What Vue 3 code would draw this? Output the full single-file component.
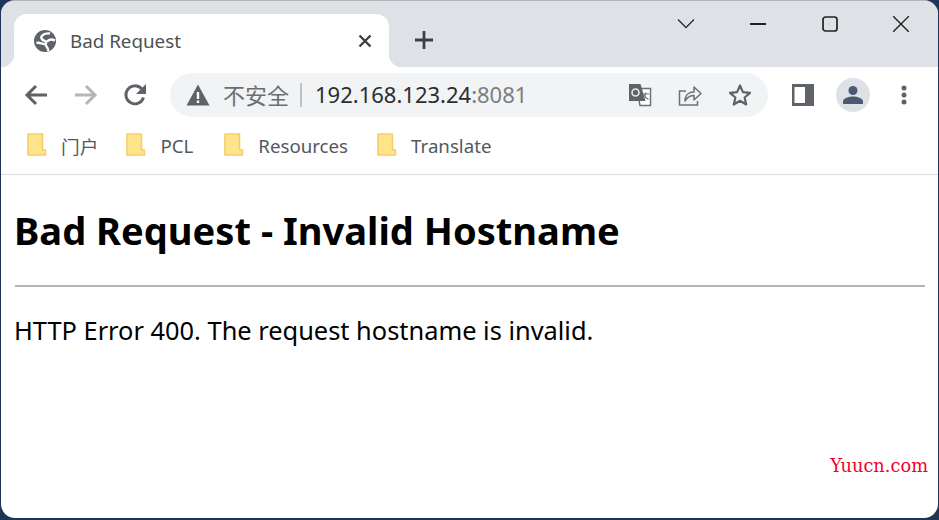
<script setup>
const bookmarks = [
  { label: '门户', gap: 'b1' },
  { label: 'PCL', gap: 'b2' },
  { label: 'Resources', gap: 'b3' },
  { label: 'Translate', gap: 'b4' },
]
</script>

<template>
  <div class="screen">
    <div class="window">
      <header class="strip">
        <div class="tab">
          <svg class="globe" viewBox="0 0 24 24" width="24" height="24">
            <circle cx="12" cy="12" r="11" fill="#5f6368" />
            <path d="M17 4.500c-3-.5-7 .5-8.500 3-1 2 1 3.500 3.500 4.500 2 1 1.500 3-.5 3-2.500 0-5-2-8-1M12 15c2 3 3 4 3.500 7M14 12.500c2-2.500 5-2.500 8-1" fill="none" stroke="#fff" stroke-width="2.400" />
          </svg>
          <span class="tab-title">Bad Request</span>
          <svg class="tab-close" viewBox="0 0 14 14" width="14" height="14">
            <path d="M1.500 1.500l11 11M12.500 1.500l-11 11" stroke="#3c4043" stroke-width="2.400" fill="none" />
          </svg>
        </div>
        <svg class="plus" viewBox="0 0 20 20" width="20" height="20">
          <path d="M10 1v18M1 10h18" stroke="#3c4043" stroke-width="2.800" fill="none" />
        </svg>
        <div class="controls">
          <svg viewBox="0 0 18 12" width="18" height="12"><path d="M1 1.500l8 8 8-8" fill="none" stroke="#2b2b2b" stroke-width="1.300" /></svg>
          <svg viewBox="0 0 16 16" width="16" height="16"><path d="M0 8h16" stroke="#222" stroke-width="1.800" /></svg>
          <svg viewBox="0 0 16 16" width="16" height="16"><rect x="1" y="1" width="14" height="14" rx="2.500" fill="none" stroke="#222" stroke-width="1.700" /></svg>
          <svg viewBox="0 0 16 16" width="16" height="16"><path d="M0 0l16 16M16 0L0 16" stroke="#222" stroke-width="1.400" fill="none" /></svg>
        </div>
      </header>

      <nav class="toolbar">
        <svg class="nav back" viewBox="0 0 24 24" width="24" height="24"><path d="M23 12H3M12 3l-9 9 9 9" fill="none" stroke="#5f6368" stroke-width="3" /></svg>
        <svg class="nav fwd" viewBox="0 0 24 24" width="24" height="24"><path d="M1 12h20M12 3l9 9-9 9" fill="none" stroke="#b4b6b9" stroke-width="3" /></svg>
        <svg class="nav reload" viewBox="0 0 24 24" width="24" height="24">
          <path d="M20.500 14.500a9 9 0 1 1-1.900-8.700L21 8.500" fill="none" stroke="#5f6368" stroke-width="2.900" />
          <path d="M23 1v10H13z" fill="#5f6368" />
        </svg>
        <div class="omnibox">
          <svg class="warn" viewBox="0 0 24 22" width="24" height="22">
            <path d="M12 .5L23.500 21.500H.5z" fill="#5f6368" />
            <path d="M10.800 8h2.400v7h-2.400zM10.800 16.500h2.400v2.500h-2.400z" fill="#fff" />
          </svg>
          <span class="insecure">不安全</span>
          <span class="divider"></span>
          <span class="url">192.168.123.24<span class="port">:8081</span></span>
          <div class="omni-icons">
            <svg viewBox="0 0 24 24" width="24" height="24">
              <path d="M9 5.500h13.500v17H12z" fill="#fff" stroke="#6d7175" stroke-width="1.500" />
              <path d="M1 1h11.500l5 17H1z" fill="#5f6368" />
              <circle cx="7.500" cy="9.500" r="3.500" fill="none" stroke="#e8eaed" stroke-width="1.600" />
              <path d="M15 11h6M18 9.500c-.5 3-2 5-3.500 6M16 12c.8 2 2.500 3.500 4.500 4.500" fill="none" stroke="#6d7175" stroke-width="1.200" />
            </svg>
            <svg viewBox="0 0 24 24" width="24" height="24">
              <path d="M8 8H1.500v14h18v-4" fill="none" stroke="#6d7175" stroke-width="1.500" />
              <path d="M7 18c0-6 4-9 9-9V4l7 6.500-7 6.500v-4.500c-4 0-6.500 1.500-9 5.500z" fill="#f1f3f4" stroke="#6d7175" stroke-width="1.500" stroke-linejoin="round" />
            </svg>
            <svg viewBox="0 0 24 24" width="24" height="24">
              <path d="M12 2.500l2.900 6.600 7.100.7-5.400 4.700 1.600 7-6.200-3.700-6.200 3.700 1.600-7L2 9.800l7.100-.7z" fill="none" stroke="#5f6368" stroke-width="2.200" stroke-linejoin="round" />
            </svg>
          </div>
        </div>
        <svg class="panel" viewBox="0 0 22 22" width="22" height="22">
          <rect x="0" y="0" width="22" height="22" fill="#5f6368" />
          <rect x="2.500" y="3" width="10.500" height="16" fill="#fff" />
        </svg>
        <div class="avatar">
          <svg viewBox="0 0 20 20" width="20" height="20">
            <circle cx="10" cy="5.500" r="4.500" fill="#4a5a74" />
            <path d="M0 19v-2.500c0-3.500 6-5 10-5s10 1.500 10 5V19z" fill="#4a5a74" />
          </svg>
        </div>
        <svg class="menu" viewBox="0 0 6 20" width="6" height="20">
          <circle cx="3" cy="3" r="2.500" fill="#5f6368" />
          <circle cx="3" cy="10" r="2.500" fill="#5f6368" />
          <circle cx="3" cy="17" r="2.500" fill="#5f6368" />
        </svg>
      </nav>

      <div class="bookmarks">
        <div v-for="b in bookmarks" :key="b.label" class="bookmark" :class="b.gap">
          <svg class="folder" viewBox="0 0 20 23" width="20" height="23">
            <path d="M1 1h14.500v16H18.500v5H1z" fill="#fee48c" stroke="#f5cf63" stroke-width="1.600" stroke-linejoin="round" />
          </svg>
          <span class="bookmark-label">{{ b.label }}</span>
        </div>
      </div>

      <main class="page">
        <h1>Bad Request - Invalid Hostname</h1>
        <hr />
        <p>HTTP Error 400. The request hostname is invalid.</p>
        <div class="mark">Yuucn.com</div>
      </main>
    </div>
  </div>
</template>

<style>
html, body { margin: 0; overflow: hidden; }
</style>

<style scoped>
.screen {
  width: 939px;
  height: 520px;
  background: #1d3557;
  overflow: hidden;
  font-family: "Noto Sans", "Noto Sans CJK SC", sans-serif;
}
.window {
  box-sizing: border-box;
  width: 937px;
  height: 518px;
  margin-left: 1px;
  border-top: 1px solid #b5b5b5;
  border-radius: 14px;
  background: #fff;
  overflow: hidden;
  display: flex;
  flex-direction: column;
}
.strip {
  height: 66px;
  background: #dee1e6;
  display: flex;
  align-items: flex-start;
  flex: none;
}
.tab {
  position: relative;
  box-sizing: border-box;
  margin: 13px 0 0 13px;
  width: 375px;
  height: 53px;
  background: #fff;
  border-radius: 13px 13px 0 0;
  display: flex;
  align-items: center;
  padding: 0 17px 0 20px;
}
.tab::before, .tab::after {
  content: "";
  position: absolute;
  bottom: 0;
  width: 13px;
  height: 13px;
}
.tab::before { left: -13px; background: radial-gradient(circle at 0 0, #dee1e6 13px, #fff 13.500px); }
.tab::after { right: -13px; background: radial-gradient(circle at 100% 0, #dee1e6 13px, #fff 13.500px); }
.globe { flex: none; margin-left: -1px; }
.tab-title {
  margin-left: 13px;
  font-size: 18.800px;
  color: #4d5156;
  flex: 1;
}
.plus { margin: 29px 0 0 25px; flex: none; }
.controls {
  margin: 15px 29px 0 auto;
  display: flex;
  align-items: center;
  gap: 55.500px;
  height: 16px;
}
.toolbar {
  height: 56px;
  flex: none;
  display: flex;
  align-items: center;
  padding: 0 0 0 23px;
}
.fwd { margin-left: 26px; }
.reload { margin-left: 25px; }
.omnibox {
  box-sizing: border-box;
  margin-left: 23px;
  width: 598px;
  height: 44px;
  background: #f1f3f4;
  border-radius: 22px;
  display: flex;
  align-items: center;
  padding-left: 16px;
}
.warn { flex: none; }
.insecure { margin: 0 0 2px 13px; font-size: 22px; color: #6a6e73; }
.divider { margin-left: 11px; width: 2px; height: 24px; background: #bdc1c6; }
.url { margin: 0 0 2px 13px; font-size: 22px; color: #2b2d30; }
.port { color: #7a7e83; }
.omni-icons {
  margin-left: auto;
  margin-right: 16px;
  display: flex;
  gap: 26px;
}
.panel { margin-left: 24px; flex: none; }
.avatar {
  margin-left: 22px;
  width: 34px;
  height: 34px;
  border-radius: 50%;
  background: #dee1e6;
  display: flex;
  align-items: center;
  justify-content: center;
}
.menu { margin-left: 31px; flex: none; }
.bookmarks {
  box-sizing: border-box;
  height: 52px;
  padding: 0 0 9px 26px;
  flex: none;
  display: flex;
  align-items: center;
  border-bottom: 1px solid #dadce0;
  font-size: 18.700px;
  color: #54585d;
}
.bookmark { display: flex; align-items: center; gap: 14px; }
.bookmark-label { padding-top: 2px; }
.b2 { margin-left: 28px; }
.b3 { margin-left: 31px; }
.b4 { margin-left: 29px; }
.page {
  position: relative;
  flex: 1;
  padding: 0 13px 0 14px;
  color: #000;
}
h1 {
  margin: 31px 0 0 -1px;
  font-size: 38.100px;
  line-height: 48px;
  font-weight: 700;
}
hr {
  margin: 31px 0 0;
  border: none;
  height: 2px;
  background: #b4b4b4;
}
p {
  margin: 26px 0 0 -1px;
  font-size: 25.400px;
  line-height: 34px;
}
.mark {
  position: absolute;
  right: 10px;
  bottom: 42px;
  font-family: "DejaVu Serif", serif;
  font-size: 17.800px;
  color: #f5002a;
}
</style>
